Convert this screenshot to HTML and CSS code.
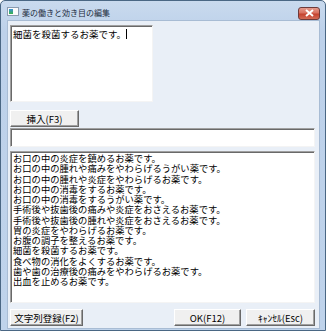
FILE: index.html
```html
<!DOCTYPE html>
<html lang="ja">
  <head>
    <meta charset="UTF-8" />
    <title>薬の働きと効き目の編集</title>
    <link rel="stylesheet" href="styles.css">
  </head>
  <body>
    <div class="window">
      <div class="titlebar">
        <div class="app-icon"><span class="app-icon-side"></span></div>
        <div class="title">薬の働きと効き目の編集</div>
        <div class="close-button">
          <svg width="11" height="8" viewBox="0 0 11 8">
            <path d="M2 1 L9 7 M9 1 L2 7" stroke="#fff" stroke-width="2" fill="none" />
          </svg>
        </div>
      </div>

      <div class="client">
        <div class="memo sunken">細菌を殺菌するお薬です。<span class="caret"></span></div>

        <button class="win-button insert-button">挿入(F3)</button>

        <div class="line-edit sunken"></div>

        <div class="list sunken">
          <div class="list-item">お口の中の炎症を鎮めるお薬です。</div>
          <div class="list-item">お口の中の腫れや痛みをやわらげるうがい薬です。</div>
          <div class="list-item">お口の中の腫れや炎症をやわらげるお薬です。</div>
          <div class="list-item">お口の中の消毒をするお薬です。</div>
          <div class="list-item">お口の中の消毒をするうがい薬です。</div>
          <div class="list-item">手術後や抜歯後の痛みや炎症をおさえるお薬です。</div>
          <div class="list-item">手術後や抜歯後の腫れや炎症をおさえるお薬です。</div>
          <div class="list-item">胃の炎症をやわらげるお薬です。</div>
          <div class="list-item">お腹の調子を整えるお薬です。</div>
          <div class="list-item">細菌を殺菌するお薬です。</div>
          <div class="list-item">食べ物の消化をよくするお薬です。</div>
          <div class="list-item">歯や歯の治療後の痛みをやわらげるお薬です。</div>
          <div class="list-item">出血を止めるお薬です。</div>
        </div>

        <div class="button-row">
          <button class="win-button register-button">文字列登録(F2)</button>
          <div class="spacer"></div>
          <button class="win-button ok-button">OK(F12)</button>
          <button class="win-button cancel-button">ｷｬﾝｾﾙ(Esc)</button>
        </div>
      </div>
    </div>
  </body>
</html>
```

FILE: styles.css
```css
body {
  margin: 0;
  padding: 0;
  background-color: #ffffff;
  font-family: "Noto Sans CJK JP", "DejaVu Sans", sans-serif;
  font-size: 9.5px;
  color: #000;
}

.window {
  width: 326px;
  height: 331px;
  box-sizing: border-box;
  border: 1px solid #4a6784;
  border-radius: 5px 5px 0 0;
  background: linear-gradient(to bottom, #c9daee 0px, #bdd1ea 30px, #bfd3eb 100%);
  display: flex;
  flex-direction: column;
  padding: 0 5px 2px 6px;
}

/* Title bar */
.titlebar {
  height: 19px;
  display: flex;
  align-items: center;
  flex-shrink: 0;
}

.app-icon {
  width: 10px;
  height: 7px;
  margin-top: 2px;
  background-color: #fbfbfb;
  border: 1px solid #8a9bb0;
  overflow: hidden;
}

.app-icon-side {
  display: block;
  width: 4px;
  height: 5px;
  margin: 1px 0 0 1px;
  background: linear-gradient(to bottom, #3d8fd6, #37b34a);
}

.title {
  margin-left: 3px;
  margin-top: 3px;
  font-size: 8px;
  color: #1b2a3c;
}

.close-button {
  margin-left: auto;
  margin-top: 5px;
  width: 20px;
  height: 11px;
  border: 1px solid #6d3a3a;
  border-radius: 3px;
  background: linear-gradient(to bottom, #e49a8c 0%, #d8705f 45%, #c4422f 55%, #d26a55 100%);
  display: flex;
  align-items: center;
  justify-content: center;
}

.close-button svg {
  display: block;
}

/* Client area */
.client {
  flex: 1;
  background-color: #e9eff7;
  border: 1px solid #a8bcd4;
  display: flex;
  flex-direction: column;
  padding: 4px 4px 2px 2px;
}

.sunken {
  background-color: #fff;
  border-top: 1px solid #a0a0a0;
  border-left: 1px solid #a0a0a0;
  border-right: 1px solid #f4f4f4;
  border-bottom: 1px solid #f4f4f4;
  box-shadow: inset 1px 1px 0 #696969;
  box-sizing: border-box;
}

.memo {
  width: 143px;
  height: 77px;
  padding: 2px 0 0 2px;
  line-height: 12px;
  white-space: nowrap;
}

.caret {
  display: inline-block;
  width: 1px;
  height: 10px;
  background-color: #000;
  vertical-align: -1px;
}

.win-button {
  font-family: "Noto Sans CJK JP", "DejaVu Sans", sans-serif;
  font-size: 9.5px;
  color: #000;
  background-color: #f0f0f0;
  border-top: 1px solid #fff;
  border-left: 1px solid #fff;
  border-right: 1px solid #696969;
  border-bottom: 1px solid #696969;
  box-shadow: inset -1px -1px 0 #a0a0a0;
  padding: 0;
  height: 17px;
  line-height: 14px;
  box-sizing: border-box;
}

.insert-button {
  width: 69px;
  margin-top: 8px;
}

.line-edit {
  height: 19px;
  margin-top: 1px;
}

.list {
  height: 152px;
  margin-top: 4px;
  padding: 1px 0 0 2px;
  overflow: hidden;
}

.list-item {
  font-size: 9.3px;
  height: 10.25px;
  line-height: 10.25px;
  white-space: nowrap;
}

.button-row {
  display: flex;
  margin-top: 6px;
}

.spacer {
  flex: 1;
}

.register-button {
  width: 73px;
}

.ok-button {
  width: 67px;
}

.cancel-button {
  width: 69px;
  margin-left: 5px;
}
```
